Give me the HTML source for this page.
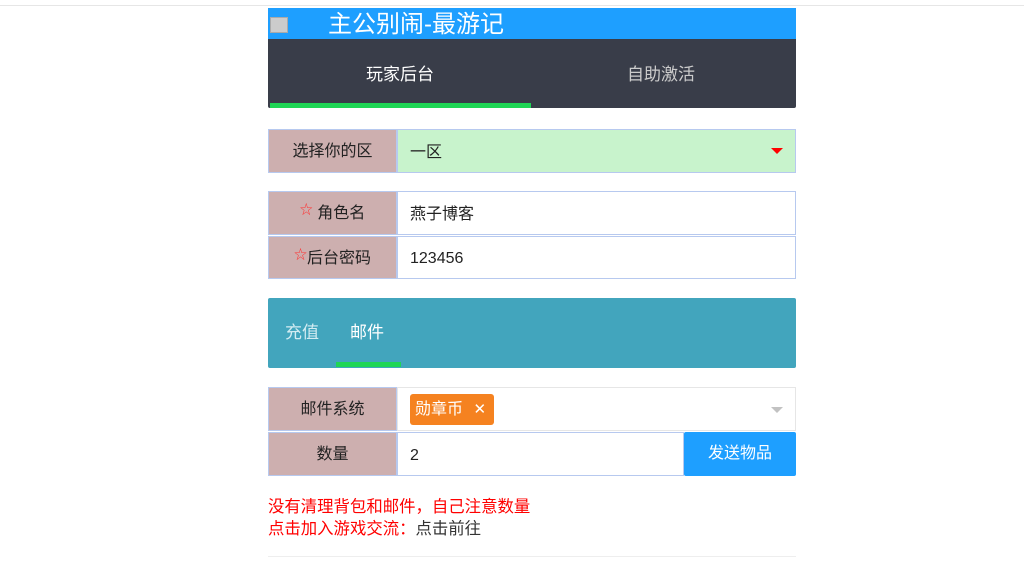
<!DOCTYPE html>
<html><head><meta charset="utf-8"><style>
body{margin:0;background:#fff;font-family:"Liberation Sans","Noto Sans CJK SC",sans-serif;font-size:16px;color:#333;}
.top{position:absolute;left:0;top:5px;width:1024px;height:1px;background:#e6e6e6}
.c{position:absolute;left:268px;width:528px}
.hd{top:8px;height:31px;background:#1e9fff;color:#fff;font-size:24px;line-height:33px}
.nav{top:39px;height:69px;background:#393d49;border-radius:0 0 2px 2px}
.nav span{position:absolute;top:0;line-height:71px;font-size:17px}
.row{position:absolute;left:268px;width:528px;height:44px;box-sizing:border-box}
.lb{position:absolute;left:0;top:0;width:129px;height:100%;background:#cdafaf;border:1px solid #b7c9ef;box-sizing:border-box;text-align:center;line-height:44px;color:#222}
.in{position:absolute;left:129px;top:0;right:0;height:100%;border:1px solid #b7c9ef;box-sizing:border-box;line-height:45px;padding-left:12px;color:#222}
.star{color:#f33;font-size:13px;vertical-align:top;position:relative;top:-4px}
</style></head><body>
<div class="top"></div>
<div class="c hd"><span style="position:absolute;left:2px;top:9px;width:18px;height:16px;background:#ccc;border:1px solid #aaa;box-sizing:border-box"></span><span style="position:absolute;left:60px">主公别闹-最游记</span></div>
<div class="c nav"><span style="left:98px;color:#fff">玩家后台</span><span style="left:359px;color:#ccc">自助激活</span><div style="position:absolute;left:2px;top:64px;width:261px;height:5px;background:#1fd655"></div></div>
<div class="row" style="top:129px"><div class="lb">选择你的区</div><div class="in" style="background:#c8f3cc">一区<span style="position:absolute;right:12px;top:18px;border:6px solid transparent;border-top:6px solid #f00;border-bottom:0"></span></div></div>
<div class="row" style="top:191px"><div class="lb"><span class="star">☆</span> 角色名</div><div class="in">燕子博客</div></div>
<div class="row" style="top:236px;height:43px"><div class="lb" style="line-height:43px"><span class="star">☆</span>后台密码</div><div class="in" style="line-height:43px">123456</div></div>
<div class="c" style="top:298px;height:70px;background:#42a5bd;border-radius:2px"><span style="position:absolute;left:17px;line-height:70px;color:#d3ecf2;font-size:17px">充值</span><span style="position:absolute;left:82px;line-height:70px;color:#fff;font-size:17px">邮件</span><div style="position:absolute;left:68px;top:64px;width:65px;height:5px;background:#1fd655"></div></div>
<div class="row" style="top:387px"><div class="lb">邮件系统</div><div class="in" style="border-color:#e6e6e6;padding-left:0"><span style="position:absolute;left:12px;top:6px;height:31px;width:84px;background:#f58220;border-radius:3px;color:#fff;line-height:31px;padding-left:5px;box-sizing:border-box">勋章币 <span style="margin-left:6px;font-size:15px">✕</span></span><span style="position:absolute;right:12px;top:19px;border:6px solid transparent;border-top:6px solid #c2c2c2;border-bottom:0"></span></div></div>
<div class="row" style="top:432px"><div class="lb">数量</div><div class="in" style="right:112px">2</div><div style="position:absolute;right:0;top:0;width:112px;height:44px;background:#1e9fff;color:#fff;text-align:center;line-height:44px;border-radius:2px">发送物品</div></div>
<div class="c" style="top:496px;line-height:22px;color:#f00;font-size:16.4px">没有清理背包和邮件，自己注意数量<br>点击加入游戏交流：<span style="color:#333">点击前往</span></div>
<div class="c" style="top:556px;height:1px;background:#eee"></div>
</body></html>
